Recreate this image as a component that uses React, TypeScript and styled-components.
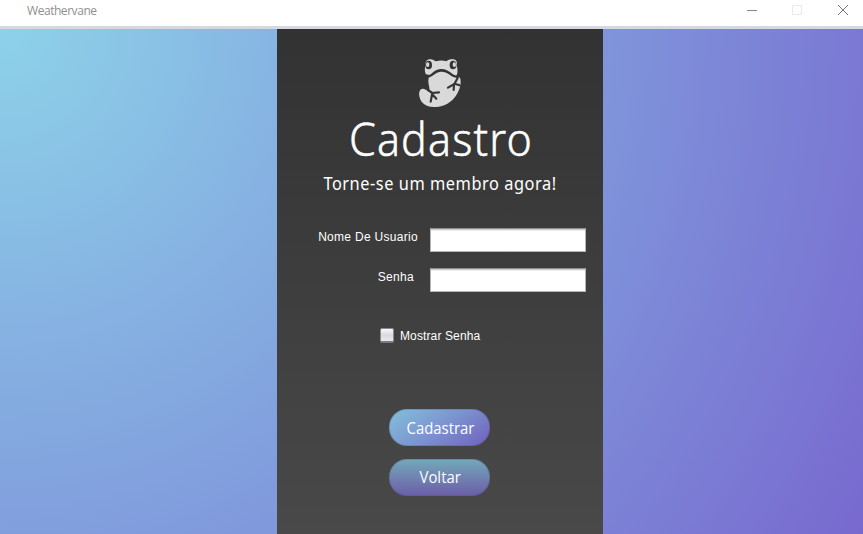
import React from "react";
import styled, { createGlobalStyle } from "styled-components";

const GlobalStyle = createGlobalStyle`
  * { box-sizing: border-box; }
  body { margin: 0; overflow: hidden; }
  button, input { font: inherit; }
`;

const Window = styled.div`
  width: 863px;
  height: 534px;
  display: flex;
  flex-direction: column;
  overflow: hidden;
`;

const TitleBar = styled.header`
  height: 29px;
  flex: none;
  display: flex;
  justify-content: space-between;
  padding: 0 14px 0 27px;
  background: #fff;
  border-bottom: 3px solid #d5d8e0;
`;

const AppName = styled.span`
  font: 12px/22px "Open Sans", sans-serif;
  letter-spacing: -0.45px;
  color: #8f8f8f;
`;

const WindowControls = styled.div`
  display: flex;
  gap: 33px;
  padding-top: 4px;
`;

const ControlIcon = styled.svg`
  display: block;
  width: 12px;
  height: 12px;
  fill: none;
`;

const Backdrop = styled.main`
  flex: 1;
  display: flex;
  padding-left: 277px;
  background: radial-gradient(circle 1000px at 0 0, #8dd2e9 0%, #86b2e2 30%, #7f95db 60%, #7869cf 100%);
`;

const Panel = styled.form`
  width: 326px;
  display: flex;
  flex-direction: column;
  background: linear-gradient(#323232, #494949);
  color: #fff;
`;

const Frog = styled.svg`
  display: block;
  width: 70px;
  height: 65px;
  margin: 21px 0 0 128px;
`;

const Title = styled.h1`
  margin: -9px 0 0;
  padding-left: 2px;
  text-align: center;
  font: 300 46px/64px "Noto Sans", sans-serif;
  letter-spacing: 1.2px;
  transform: scaleX(0.935);
  -webkit-text-stroke: 0.5px #fff;
`;

const Subtitle = styled.p`
  margin: 1px 0 -1px;
  height: 24px;
  text-align: center;
  font: 400 18px/24px "Noto Sans", sans-serif;
  letter-spacing: 0.6px;
  white-space: nowrap;
  transform: scaleX(0.908);
`;

const Fields = styled.div`
  display: grid;
  gap: 16px;
  margin-top: 34px;
`;

const Field = styled.label<{ $gap: number }>`
  display: flex;
  justify-content: flex-end;
  gap: ${(p) => p.$gap}px;
  height: 24px;
  padding-right: 17px;
  font: 12px/18px "Liberation Sans", Arial, sans-serif;
  letter-spacing: 0.3px;
  white-space: nowrap;
`;

const TextInput = styled.input`
  width: 156px;
  height: 24px;
  padding: 2px 5px;
  border: 1px solid #b5b5b5;
  border-top-color: #8c8c8c;
  border-radius: 0;
  outline: none;
  background: linear-gradient(#cfcfcf 0 1px, #ececec 1px 2px, #fff 2px);
`;

const CheckRow = styled.label`
  display: flex;
  align-items: center;
  gap: 6px;
  height: 18px;
  margin: 34px 0 0 103px;
  font: 12px/18px "Liberation Sans", Arial, sans-serif;
  letter-spacing: 0.12px;
`;

const CheckText = styled.span`
  padding-top: 2px;
`;

const Checkbox = styled.input`
  appearance: none;
  width: 14px;
  height: 15px;
  margin: 0;
  border: 1px solid #898c94;
  border-bottom: 2px solid #777b84;
  border-radius: 2px;
  background: linear-gradient(#f8f8fa, #d8dae0 50%, #e9eaee);
`;

const Actions = styled.div`
  display: flex;
  flex-direction: column;
  align-items: center;
  gap: 13px;
  margin-top: 65px;
  padding-right: 1px;
`;

const ActionButton = styled.button<{ $fill: string; $lift?: number }>`
  width: 101px;
  height: 37px;
  padding: 0 0 ${(p) => p.$lift ?? 0}px 1px;
  border: 1px solid rgba(80, 85, 105, 0.3);
  border-radius: 18px;
  background: ${(p) => p.$fill} border-box;
  color: #fff;
  font: 400 16px/22px "Open Sans", sans-serif;
`;

const ButtonText = styled.span`
  display: inline-block;
  transform: scaleX(0.93);
`;

export default function App() {
  return (
    <Window>
      <GlobalStyle />
      <TitleBar>
        <AppName>Weathervane</AppName>
        <WindowControls>
          <ControlIcon viewBox="0 0 12 12" stroke="#858585"><path d="M0 6.5h10" /></ControlIcon>
          <ControlIcon viewBox="0 0 12 12" stroke="#e9e9e9"><path d="M.5 1.5h9v9h-9z" /></ControlIcon>
          <ControlIcon viewBox="0 0 12 12" stroke="#777"><path d="M1 1l10 10M11 1L1 11" /></ControlIcon>
        </WindowControls>
      </TitleBar>
      <Backdrop>
        <Panel>
          <Frog viewBox="0 0 210 195">
            <g fill="#d9d9d9">
              <path d="M62 72C58 62 59 53 62 45C60 34 66 27 77 28C83 28 88 32 93 34C103 31 115 31 124 34C131 28 138 27 145 28C156 30 157 38 155 47C158 56 159 66 155 76C148 77 144 74 136 67C126 59 116 56 107 57C95 58 87 64 79 71C73 76 67 75 62 72Z" />
              <path d="M71 83C84 78 94 66 108 65C122 64 132 73 145 81L156 84C163 80 166 82 167 93C168 108 162 123 153 137C139 157 119 169 92 171C64 173 47 160 43 139C41 125 45 115 55 116C66 118 69 126 72 123C76 116 70 105 70 93Z" />
            </g>
            <g fill="#343434">
              <ellipse cx="71" cy="45" rx="10" ry="13" />
              <ellipse cx="144" cy="45" rx="10" ry="13" />
            </g>
            <g fill="#d9d9d9">
              <ellipse cx="68" cy="44" rx="5" ry="7" />
              <ellipse cx="148" cy="44" rx="5" ry="7" />
            </g>
            <g fill="none" stroke="#353535" strokeWidth="6.5" strokeLinecap="round" strokeLinejoin="round">
              <path d="M69 120L82 129L102 127M82 129L77 155M83 134L94 146" />
              <path d="M158 84L148 102L129 113M147 103L146 120M149 101L164 106" />
            </g>
          </Frog>
          <Title>Cadastro</Title>
          <Subtitle>Torne-se um membro agora!</Subtitle>
          <Fields>
            <Field $gap={12}>Nome De Usuario<TextInput type="text" /></Field>
            <Field $gap={16}>Senha<TextInput type="password" /></Field>
          </Fields>
          <CheckRow><Checkbox type="checkbox" /><CheckText>Mostrar Senha</CheckText></CheckRow>
          <Actions>
            <ActionButton type="button" $fill="linear-gradient(145deg, #82bcda 5%, #7b92cf 52%, #7164bf 95%)"><ButtonText>Cadastrar</ButtonText></ActionButton>
            <ActionButton type="button" $lift={2} $fill="linear-gradient(#74a9ba, #6b5da8)"><ButtonText>Voltar</ButtonText></ActionButton>
          </Actions>
        </Panel>
      </Backdrop>
    </Window>
  );
}
